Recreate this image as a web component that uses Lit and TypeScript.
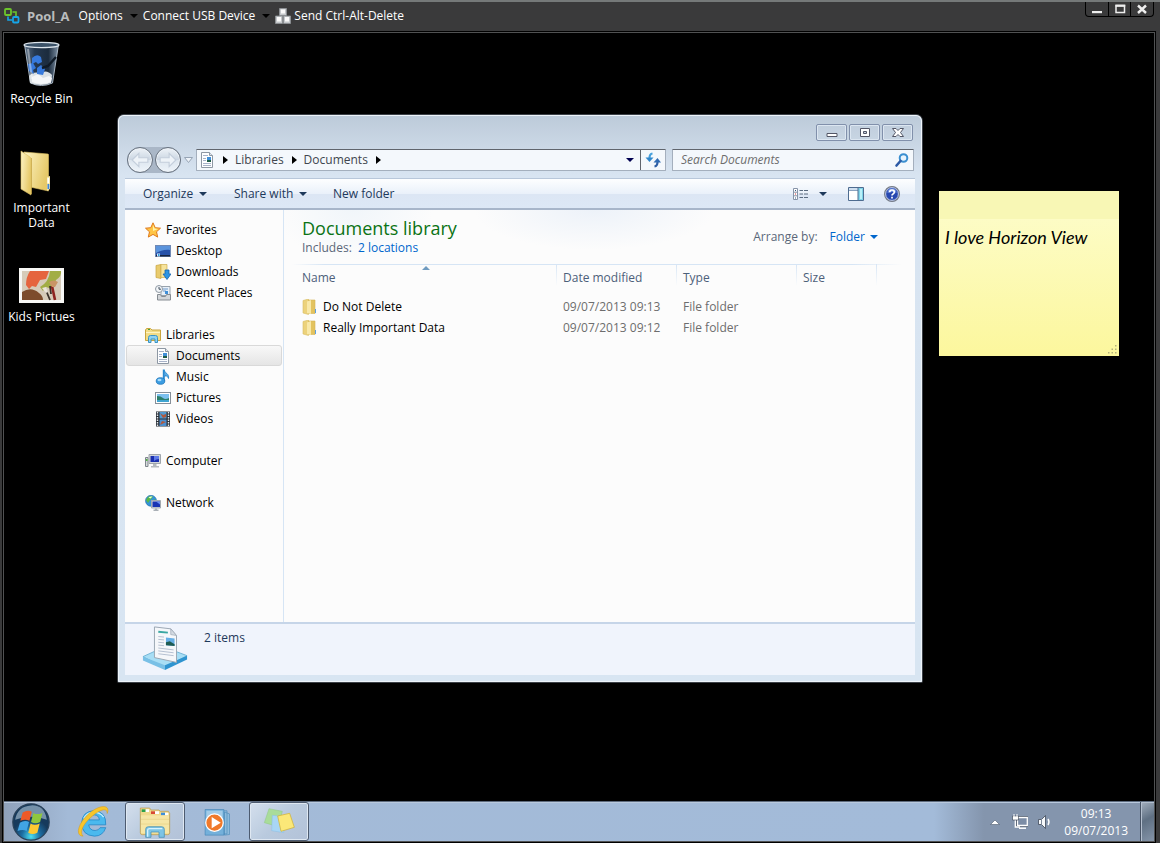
import { LitElement, html, svg, css, nothing } from "lit";
import { customElement, property } from "lit/decorators.js";
import { classMap } from "lit/directives/class-map.js";

const docShape = svg`
  <path d="M2.500 .5h8l3 3v12h-11z" fill="#fdfeff" stroke="#8d97a3"/>
  <path d="M10.500 .5v3h3" fill="#dfe6ee" stroke="#8d97a3"/>
  <path d="M4 3.500h5M4 6.500h3M4 8.500h3M4 11.500h8M4 13.500h8" stroke="#a7b2c8"/>
  <path d="M8 5h4v5H8z" fill="#3f8fd8"/><path d="M8 8h4v2H8z" fill="#1d5b46"/>`;

const icons: Record<string, unknown> = {
  doc: docShape,
  star: svg`
    <path d="M8 .8l2.200 4.900 5.300.5-4 3.600 1.200 5.300L8 12.400l-4.700 2.700 1.200-5.300-4-3.600 5.300-.5z" fill="#ffc545" stroke="#df7a1c" stroke-linejoin="round"/>
    <path d="M8 3l1.500 3.500 3.500.4L8 9z" fill="#fff3a8"/>`,
  desktop: svg`
    <rect x=".5" y="2.500" width="15" height="11" fill="#2550a8" stroke="#7089b4"/>
    <path d="M1 3h14v4C10 6 5 8 1 10z" fill="#5b94dc"/>
    <path d="M1 12h14v1.500H1z" fill="#16233f"/>
    <path d="M2 10.500h3v3H2z" fill="#d6e7fb"/><path d="M3 11h1.500v2H3z" fill="#2f9be0"/>`,
  downloads: svg`
    <path d="M1 1.500l5-1v14l-5-1z" fill="#e9cb6d" stroke="#c7a33f" stroke-width=".7"/>
    <path d="M6 .5h6v13H6z" fill="#f6e39b" stroke="#cfae4d" stroke-width=".7"/>
    <path d="M10 6h4v4h2l-4 5.500L8 10h2z" fill="#2d95e3" stroke="#1563ad" stroke-width=".8"/>`,
  recent: svg`
    <path d="M6 1.500h9v9H6z" fill="#e8f0f8" stroke="#98a2ac"/>
    <path d="M8 4h5M8 6h3" stroke="#6f99c8"/><path d="M10 6h3v3h-3z" fill="#3f8fd8"/>
    <path d="M2.500 9.500h3l1 2h4l1-2h4v5.500h-13z" fill="#d3d6d9" stroke="#868c92"/>
    <circle cx="4" cy="4" r="3.500" fill="#f3f6f9" stroke="#8f99a3"/><path d="M4 2v2.200h2" stroke="#42505e" fill="none"/>`,
  libraries: svg`
    <path d="M.5 3l1-1.500h4L7 3h8.500v10.500H.5z" fill="#f3dc86" stroke="#c9a53f"/>
    <path d="M1 5.500h14" stroke="#fff5c4"/><path d="M3 2.500h2" stroke="#4aa339"/>
    <path d="M3.500 15.500v-5q0-2 2-2h5q2 0 2 2v5h-2.500V12h-4v3.500z" fill="#8fd2f2" stroke="#3b94c5"/>`,
  music: svg`
    <path d="M9 1c.5 3 5.500 3.500 4.500 8.500-.8-2-2-3-3.500-3.200V8" fill="#57aee8" stroke="#1f7fc9" stroke-width=".8"/>
    <path d="M7.800 .5h2V12h-2z" fill="#2a8ad2"/>
    <ellipse cx="5.500" cy="12" rx="4.300" ry="3.300" fill="#3b9de2" stroke="#1c72b8" stroke-width=".8"/>
    <ellipse cx="4.500" cy="11" rx="2" ry="1.200" fill="#a8dcfa"/>`,
  pictures: svg`
    <rect x=".5" y="2.500" width="15" height="11" fill="#fff" stroke="#868f99"/>
    <path d="M2 4h12v8H2z" fill="#7cc0ee"/><path d="M2 6q4 0 6 2t6 0v4H2z" fill="#2c7f6b"/>
    <path d="M2 10h12v2H2z" fill="#3fa4d0"/>`,
  videos: svg`
    <path d="M1 .5h14v15H1z" fill="#2c3138"/>
    <path d="M2.500 1v14M13.500 1v14" stroke="#e6ebf0" stroke-width="1.400" stroke-dasharray="1.500 1"/>
    <path d="M4.500 1h7v6.500h-7z" fill="#4f9ad2"/><path d="M4.500 8.500h7V15h-7z" fill="#4b8fd0"/>
    <path d="M5 2l3 2 3-1v3l-3 1zM5 14l2-4 4 1z" fill="#b0583c"/>`,
  computer: svg`
    <path d="M.5 4.500h2.500v9H.5z" fill="#d6dadd" stroke="#7f868c"/><path d="M1 6h1.500v2H1z" fill="#52b543"/>
    <path d="M4 1.500h11.500v9H4z" fill="#d2d6da" stroke="#a0a6ac"/><path d="M5.500 3h8.500v6H5.500z" fill="#1b2fae"/>
    <path d="M9 3h5v3q-3 0-5 2z" fill="#5e7be8"/><path d="M8 11h3.500v2H14v1.500H6V13h2z" fill="#b5babe"/>`,
  network: svg`
    <circle cx="6" cy="5.800" r="5.500" fill="#3493d8" stroke="#1d6aa5" stroke-width=".6"/>
    <path d="M3 2q3-2 5 0L5 5 3 8 1 5zM7 6l3-2 1 3-3 2z" fill="#58b947"/><path d="M3.500 2.500q1.500-1.500 4-1l-2 2z" fill="#e7ffe5"/>
    <path d="M6.500 5.500h9v7.500h-9z" fill="#cfd4da" stroke="#a3aab2"/><path d="M7.500 6.500h7.500v5.500H7.500z" fill="#1a34b4"/>
    <path d="M11 6.500h4v3z" fill="#6a8cf0"/><path d="M10 13.500h2v1h1.500V16h-5v-1.500H10z" fill="#aab0b6"/>`,
  folder: svg`
    <path d="M1 1.500L6.500 0v15.500L1 14z" fill="#ecd27b" stroke="#d9bd63" stroke-width=".6"/>
    <path d="M6.500 1h6.500v13.500H6.500z" fill="#e3c35f" stroke="#d3b455" stroke-width=".6"/>
    <path d="M5 2.500L9 1v14l-4-1z" fill="#f8e8a8"/><path d="M13 10h1v4h-1z" fill="#5b9fe2"/>`,
  pool: svg`
    <rect x="1" y="1" width="6" height="6" rx="1" fill="none" stroke="#6cc52c" stroke-width="1.800"/>
    <rect x="9" y="9" width="5.500" height="5.500" rx="1" fill="none" stroke="#16a5e8" stroke-width="1.800"/>
    <path d="M8.500 4h3.500v4" fill="none" stroke="#6cc52c" stroke-width="1.600"/>
    <path d="M4 8.500V12h4" fill="none" stroke="#16a5e8" stroke-width="1.600"/>`,
  keys: svg`
    <path d="M4.500 .5h7v7h-7zM.5 8h7v7.500h-7zM8.500 8h7v7.500h-7z" fill="#c5c8cb" stroke="#8e9296" stroke-width=".8"/>
    <path d="M6 1.500h4v4H6zM2 9h4v4.500H2zM10 9h4v4.500h-4z" fill="#fafafa"/>`,
  refresh: svg`
    <path d="M7.500 1.500Q4.500 2 4.500 6" fill="none" stroke="#45a0dc" stroke-width="2.200"/><path d="M.5 5.500h8L4.500 10z" fill="#3187cc"/>
    <path d="M9.500 14.500q3-.5 3-4.500" fill="none" stroke="#2f5fa5" stroke-width="2.200"/><path d="M8.500 10.500h7.500L12.500 6z" fill="#2f6bb3"/>`,
  search: svg`
    <circle cx="9.500" cy="6" r="3.800" fill="#e9f4fd" stroke="#3b8fd0" stroke-width="2"/>
    <path d="M6.500 9L2.500 13.500" stroke="#2c5aa5" stroke-width="2.600" stroke-linecap="round"/>`,
  details: svg`
    <path d="M.5 2.500h4v11h-4zM.5 6.200h4M.5 9.800h4" fill="#fff" stroke="#8794a8"/>
    <path d="M2 4h1v1H2zM2 11.500h1v1H2z" fill="#35597e"/><path d="M2 7.500h1v1H2z" fill="#d33"/>
    <path d="M6.500 4.500h3.500m1 0h4M6.500 8h3.500m1 0h4M6.500 11.500h3.500m1 0h4" stroke="#5a6b80"/>`,
  pane: svg`
    <path d="M.5 1.500h15v13H.5z" fill="#fff" stroke="#4e6c90"/><path d="M1 2h9v2H1z" fill="#cfdff0"/>
    <path d="M1 4.500h9" stroke="#8ba3bf"/><path d="M10 2h5v12h-5z" fill="#7fd3e8"/><path d="M12 3h2v10h-2z" fill="#b9f0f8"/><path d="M10 2v12" stroke="#4e6c90"/>`,
  help: svg`
    <circle cx="8" cy="8" r="7.400" fill="#2748b0" stroke="#7a7f88" stroke-width="1.200"/>
    <circle cx="8" cy="8" r="6.400" fill="none" stroke="#d5dcea" stroke-width=".9"/>
    <path d="M3.500 7q0-4.500 4.500-4.500T12.500 7q-4-2-9 0z" fill="#6f8fe0"/>
    <path d="M5.700 6.200q0-2.200 2.300-2.200t2.300 2q0 1.200-1.300 1.900-1 .5-1 1.700M8 10.800v1.600" fill="none" stroke="#fff" stroke-width="1.700"/>`,
  min: svg`<path d="M3 8.500h10v3H3z" fill="#fff" stroke="#535666"/>`,
  max: svg`<path d="M3.500 3.500h9v8h-9zM6.500 6.500h3v2h-3z" fill="#fff" fill-rule="evenodd" stroke="#535666"/>`,
  close: svg`<path d="M2.500 3.500h3.500l2 2 2-2h3.500L10.500 7.500l3 4H10l-2-2-2 2H2.500l3-4z" fill="#fff" stroke="#535666"/>`,
  cmin: svg`<path d="M3 10h10v2.200H3z" fill="#eee"/>`,
  cmax: svg`<path d="M4 5h8.500v6.500H4z" fill="none" stroke="#eee" stroke-width="1.500"/><path d="M3.300 4.500h10" stroke="#eee" stroke-width="2"/>`,
  cclose: svg`<path d="M4 4.500l8 7.500M12 4.500L4 12" stroke="#eee" stroke-width="2.400"/>`,
  up: svg`<path d="M3.500 10.500L8 6l4.500 4.500z" fill="#fff" stroke="#4f5d70" stroke-width=".6"/>`,
  lan: svg`
    <path d="M5.500 3.500h10v8h-10z" fill="#72839b" stroke="#2f3a49" stroke-width="2.400"/>
    <path d="M5.500 3.500h9.800v8H5.500z" fill="#7c8da6" stroke="#fff" stroke-width="1.300"/>
    <path d="M7 14.200h7" stroke="#fff" stroke-width="1.500"/>
    <path d="M3.300 5v8H8" fill="none" stroke="#fff" stroke-width="1.300"/><path d="M.5 2h6v4h-6z" fill="#fff" stroke="#2f3a49" stroke-width=".6"/><path d="M2 0v3M5 0v3" stroke="#fff"/>`,
  sound: svg`
    <path d="M1.500 5.500h3l4-4v13l-4-4h-3z" fill="#f7f9fb" stroke="#3d4858" stroke-width=".8"/><path d="M4.500 5.500v5" stroke="#7b8798"/>
    <path d="M11 5q2 3 0 6" fill="none" stroke="#fff" stroke-width="1.400"/>`,
};

const bigIcons: Record<string, unknown> = {
  bin: svg`
    <defs><linearGradient id="g" x2="1"><stop stop-color="#5d7187"/><stop offset=".3" stop-color="#25384f"/><stop offset=".7" stop-color="#1b2b3d"/><stop offset="1" stop-color="#7f92a6"/></linearGradient></defs>
    <path d="M6.500 4.500h34l-6 38.500q-11 5-22 0z" fill="url(#g)" stroke="#a9b6c3"/>
    <ellipse cx="23.500" cy="5" rx="17.500" ry="2.600" fill="#3b5268" stroke="#dde5ec" stroke-width="1.200"/>
    <path d="M11 36q4-5 11-3 7-4 12 2l-1 8q-10 4-21 0z" fill="#d9dfe4"/>
    <path d="M14 37l6-3 5 4 6-2 3 2-1 4q-10 4-19 0z" fill="#f4f6f8"/>
    <path d="M14 18q5-5 9-1l1 5-4 2-2-2-4 2zM10 24l5-1 3 5-3 2 1 4-5-3zM19 28l4-3 4 4-2 6-6-1z" fill="#3679dc"/>
    <path d="M24 28l6-2 8-9" stroke="#0f1a26" stroke-width="2.500" fill="none"/>
    <path d="M10 9l4 30" stroke="#fff" stroke-opacity=".4" stroke-width="2"/>`,
  folder: svg`
    <defs><linearGradient id="g" x2="1" y2=".4"><stop stop-color="#fdf4c6"/><stop offset="1" stop-color="#e6c968"/></linearGradient></defs>
    <path d="M6 3l24 2q.5 0 .5 1v36L12 38z" fill="url(#g)" stroke="#dcbf62" stroke-width=".6"/>
    <path d="M29 28l3-1v13l-3 2z" fill="#f4e6a8"/><path d="M29.500 35h1.800v5h-1.800z" fill="#3c86dd"/><path d="M29.500 29h1.500v5h-1.500z" fill="#fff"/>
    <path d="M3 2l9 6q1 .5 1 2v36L3 40z" fill="url(#g)" stroke="#dcbf62" stroke-width=".6"/>
    <path d="M13.500 9v36" stroke="#c9a848" stroke-width=".8"/>`,
  picture: svg`
    <path d="M1 10h45v35H1z" fill="#f7f7f5"/><path d="M4 13h39v29H4z" fill="#d6cbb9"/>
    <path d="M12 13h19l-3 8-6 1-4 7-4-1-3 3-3-4q0-8 4-14z" fill="#e5643e"/>
    <path d="M34 13h9q1 5-5 9l-4 9-6-2-3 4-3-4q9-5 10-16z" fill="#a2ad45"/>
    <path d="M4 34q9-6 17 1 4 3 4 7H4z" fill="#7d4c2c"/>
    <path d="M27 30l5 12M32 28l1 8" stroke="#3b322b" stroke-width="1.800"/><path d="M34 28l3 14" stroke="#8d2420" stroke-width="2.600"/>
    <path d="M31 24q5-3 9 0l-3 5h-3z" fill="#c99566"/><path d="M24 30l4-1 2 5-2 1z" fill="#ebe5da"/>`,
  orb: svg`
    <defs><radialGradient id="g" cy=".9"><stop stop-color="#4de0f0"/><stop offset=".5" stop-color="#1d6fa4"/><stop offset="1" stop-color="#163a5c"/></radialGradient></defs>
    <circle cx="24" cy="24" r="23" fill="url(#g)" stroke="#2b4259" stroke-width="1.500"/>
    <path d="M4 21Q7 4 24 3t20 18q-20-7-40 0z" fill="#c5d9ea" opacity=".55"/>
    <path d="M13.500 12q6-4 11.500-1l-3 11.500q-5-3-11.500 0z" fill="#ef5a28"/><path d="M27 12.500q5 3 11.500 0l-3 11.500q-6 3-11.500 0z" fill="#8fc73e"/>
    <path d="M10 25q6-4 11.500-1l-3 11.500q-5-3-11.500 0z" fill="#41a4e4"/><path d="M23.500 26q5 3 11.500 0l-3 11.500q-6 3-11.500 0z" fill="#fdc832"/>`,
  ie: svg`
    <path d="M42 28H18q1 8 9 8 5 0 7-4h8q-4 12-16 12Q8 43 8 25 9 9 25 8q18 1 17 20zM18 21h15q-1-7-7-7t-8 7z" fill="#4ab9ee" stroke="#1b7fc2" fill-rule="evenodd"/>
    <path d="M11 19q4-8 13-9 10 0 15 7" stroke="#c6effd" stroke-width="2" fill="none"/>
    <path d="M10 44C-3 44 4 22 22 9 36-1 49 0 44 12 44 3 34 7 25 14 11 25 4 38 10 44z" fill="#f7c52b" stroke="#d69a17" stroke-width=".7"/>`,
  explorer: svg`
    <path d="M2 11V3h14l2 3h12l2 2h12l2 3v29q0 3-3 3H5q-3 0-3-3z" fill="#f0d98c" stroke="#b5954a"/>
    <path d="M4 5h6v4H4z" fill="#2ca14b"/><path d="M18 8h6v4h-6z" fill="#d84a34"/><path d="M33 10h6v4h-6z" fill="#3c8edb"/>
    <path d="M10 5h5v4h-5zM24 8h6v4h-6zM39 10h5v4h-5z" fill="#fff"/>
    <path d="M3 14h42v27H3z" fill="#f6e6a6"/><path d="M3 20h42M3 27h42" stroke="#e6d083"/>
    <path d="M10 47V35q0-4 4-4h20q4 0 4 4v12h-8v-8H18v8z" fill="#7dc4e4" stroke="#3987b0"/>
    <path d="M13 46V36q0-2 3-2h19" stroke="#d6f3ff" stroke-width="2" fill="none"/>`,
  player: svg`
    <path d="M36 8l8 3v33l-8 1zM12 6h28v37H12z" fill="#8dbbdd" stroke="#4b8ab9"/>
    <path d="M5 4h30v41H5z" fill="#74b0da" stroke="#4184b7"/><path d="M7 6h26v16H7z" fill="#a3cce8"/>
    <circle cx="20" cy="25" r="14" fill="#f0792a" stroke="#fff" stroke-width="2"/><path d="M15.500 16L30 25l-14.500 9z" fill="#fff"/>`,
  notes: svg`
    <path d="M9 4l20 4-6 23-21-6z" fill="#a9dc9a" stroke="#8cc680" stroke-width=".7"/><path d="M14 14l19 2-2 24-18-3z" fill="#a9d6f5" stroke="#88bce2" stroke-width=".7"/>
    <path d="M22 15l18-4 7 21-20 6z" fill="#fbe878" stroke="#cfae2e"/>`,
  library: svg`
    <path d="M1 33l22-10 24 9-23 13z" fill="#a8def5" stroke="#6fb4d6"/><path d="M1 33l23 9v5L1 37z" fill="#79c0e6"/><path d="M24 42l23-10v4L24 47z" fill="#2f94d0"/>
    <path d="M13 2l17 2 6 7v28l-23-5z" fill="#f5f7fa" stroke="#9aa5b2"/><path d="M30 4v6l6 1z" fill="#d3dae2" stroke="#9aa5b2" stroke-width=".7"/>
    <path d="M17 7l10 1" stroke="#3aa7a2" stroke-width="2"/>
    <path d="M17 12l6 .6M17 15l6 .6M17 18l6 .6M17 21l6 .6M17 24l16 2M17 27l16 2M17 30l16 2" stroke="#b3bed0"/>
    <path d="M25 13l9 1v8l-9-1z" fill="#65aee6"/><path d="M25 18l4-1 5 3v2l-9-1z" fill="#1e5b52"/>`,
};

const icon = (name: string, size = 16) =>
  html`<svg width=${size} height=${size} viewBox="0 0 16 16" aria-hidden="true">${icons[name]}</svg>`;

const base = css`
  * { box-sizing: border-box; }
  button, input, textarea {
    font: inherit; color: inherit; background: none; border: 0; padding: 0; margin: 0; outline: 0;
  }
  button { display: inline-flex; align-items: center; white-space: nowrap; }
  svg { display: block; flex: none; }
`;

@customElement("large-icon")
class LargeIcon extends LitElement {
  @property() name = "";
  @property({ type: Number }) size = 48;
  static styles = css`:host { display: block; flex: none; } svg { display: block; }`;
  render() {
    return html`<svg width=${this.size} height=${this.size} viewBox="0 0 48 48" aria-hidden="true">${bigIcons[this.name]}</svg>`;
  }
}

@customElement("client-bar")
class ClientBar extends LitElement {
  static styles = [base, css`
    :host { display: flex; align-items: center; height: 31px; padding: 0 6px 2px 4px; color: #fff; background: #3a3a3b; border-top: 2px solid #757979; flex: none; }
    .pool { font-size: 13px; font-weight: 700; color: #b9bcbe; margin: 0 9px 0 7px; }
    .menu { margin-right: 5px; }
    .menu::after { content: ""; border: 4px solid transparent; border-top-color: #000; border-bottom: 0; margin-left: 7px; }
    .send { gap: 3px; }
    .controls { display: flex; margin-left: auto; align-self: flex-start; border: 1px solid #000; border-top: 0; border-radius: 0 0 4px 4px; }
    .controls button { width: 22px; height: 14px; justify-content: center; }
    .controls button + button { border-left: 1px solid #000; }
    .controls button:last-child { width: 23px; }
  `];
  render() {
    return html`
      ${icon("pool")}
      <span class="pool">Pool_A</span>
      <button class="menu">Options</button>
      <button class="menu">Connect USB Device</button>
      <button class="send">${icon("keys")}Send Ctrl-Alt-Delete</button>
      <div class="controls">
        <button aria-label="Minimize">${icon("cmin")}</button>
        <button aria-label="Maximize">${icon("cmax")}</button>
        <button aria-label="Close">${icon("cclose")}</button>
      </div>`;
  }
}

interface NavItem { label: string; icon: string; child?: boolean; selected?: boolean }

const navGroups: NavItem[][] = [
  [
    { label: "Favorites", icon: "star" },
    { label: "Desktop", icon: "desktop", child: true },
    { label: "Downloads", icon: "downloads", child: true },
    { label: "Recent Places", icon: "recent", child: true },
  ],
  [
    { label: "Libraries", icon: "libraries" },
    { label: "Documents", icon: "doc", child: true, selected: true },
    { label: "Music", icon: "music", child: true },
    { label: "Pictures", icon: "pictures", child: true },
    { label: "Videos", icon: "videos", child: true },
  ],
  [{ label: "Computer", icon: "computer" }],
  [{ label: "Network", icon: "network" }],
];

const files = [
  { name: "Do Not Delete", modified: "09/07/2013 09:13", type: "File folder" },
  { name: "Really Important Data", modified: "09/07/2013 09:12", type: "File folder" },
];

@customElement("explorer-window")
class ExplorerWindow extends LitElement {
  static styles = [base, css`
    :host { display: flex; flex-direction: column; padding: 0 7px 7px; border-radius: 6px 6px 1px 1px; color: #1e395b;
      background: linear-gradient(#bccad9, #d8e4f1 60px, #d8e5f2);
      box-shadow: inset 0 0 0 1px #eef4fa, 0 0 0 1px #3c4148; }
    .caption { display: flex; justify-content: flex-end; gap: 2px; padding: 9px 2px 8px; }
    .caption button { width: 31px; height: 17px; justify-content: center; border: 1px solid #8190ab; border-radius: 2px; box-shadow: inset 0 0 0 1px #dce6f1; }
    .address { display: flex; align-items: center; height: 22px; padding: 0 1px 0 2px; color: #40464e; }
    .back-forward { display: flex; align-items: center; gap: 2px; border-radius: 14px; background: #aab7c7; }
    .round { width: 26px; height: 26px; justify-content: center; border: 1px solid #68727f; border-radius: 50%; background: linear-gradient(#eef3f8, #cbd6e2 50%, #dde6ef 52%, #eef4fa); box-shadow: inset 0 0 0 1px #eef3f8; }
    .history { margin: 0 3px; }
    .crumbs, .search { display: flex; align-items: center; height: 22px; background: #f4f8fc; border: 1px solid #a4afbd; border-top-color: #60656d; border-radius: 1px; }
    .crumbs { flex: 1; padding-left: 2px; }
    .crumb { height: 20px; }
    .step::before { content: ""; border: 4px solid transparent; border-left: 5px solid #000; border-right: 0; margin: 0 7px 0 8px; }
    .end { margin-left: auto; width: 21px; height: 20px; justify-content: center; }
    .refresh { width: 25px; height: 20px; justify-content: center; border-left: 1px solid #60656d; }
    .search { width: 242px; margin-left: 6px; padding: 0 3px 0 8px; }
    .search input { flex: 1; min-width: 0; font-style: italic; color: #6d6d6d; }
    .search input::placeholder { color: #6d6d6d; opacity: 1; }
    .arrow::after, .solo { content: ""; border: 4px solid transparent; border-top: 4px solid #1e395b; border-bottom: 0; }
    .end .solo { border-top-color: #000050; }
    .arrow::after { margin-left: 6px; }
    .toolbar { display: flex; align-items: center; height: 32px; margin-top: 7px; padding: 0 15px 0 18px; border-top: 1px solid #b8c7da; border-bottom: 2px solid #a8b6ca;
      background: linear-gradient(#fdfeff, #eaf1fa 50%, #dce6f4 52%, #dde8f6); }
    .organize { width: 91px; }
    .share { width: 99px; }
    .views { margin-left: auto; gap: 10px; }
    .pane { margin: 0 20px 0 21px; }
    .body { display: flex; flex: 1; background: #fcfcfc; min-height: 0; }
    nav { width: 159px; border-right: 1px solid #d6e5f5; padding: 9px 1px; flex: none; }
    .group { list-style: none; margin: 0 0 21px; padding: 0; }
    .item { display: flex; align-items: center; gap: 5px; height: 21px; padding-left: 18px; color: #000; text-decoration: none; border: 1px solid transparent; border-radius: 3px; }
    .child { padding-left: 28px; }
    .selected { background: linear-gradient(#f8f8f8, #e5e5e5); border-color: #d9d9d9; }
    main { flex: 1; min-width: 0; }
    .heading { display: flex; align-items: center; justify-content: space-between; height: 54px; padding: 0 37px 0 18px;
      background: radial-gradient(ellipse 80px 50px at 70px 0, #f1f6fa, transparent), radial-gradient(ellipse 120px 40px at 310px 0, #edf2f9, transparent); }
    h1 { margin: 0; font-size: 18px; line-height: 24px; font-weight: 400; color: #0b7315; }
    .headline { padding-bottom: 2px; }
    .includes { line-height: 16px; color: #5a6779; }
    a.link { color: #0066cc; text-decoration: none; margin-left: 3px; }
    .arrange { display: flex; align-items: center; color: #5a6779; }
    .arrange button { color: #0066cc; margin-left: 12px; }
    .arrange button::after { border-top-color: #0066cc; margin-left: 5px; }
    table { width: 100%; border-collapse: collapse; table-layout: fixed; color: #6d6d6d; }
    col.name { width: 273px; } col.date, col.type { width: 120px; } col.size { width: 80px; }
    thead tr { background: linear-gradient(90deg, transparent 8px, #d6e5f5 40px, #d6e5f5 90%, transparent 98%) top / 100% 1px no-repeat; }
    th { height: 32px; padding: 0 0 5px 6px; text-align: left; font-weight: 400; color: #4c607a;
      background: linear-gradient(#d6e5f5, transparent) right top / 1px 22px no-repeat; }
    th:first-child, td:first-child { padding-left: 18px; }
    th:last-child { background: none; }
    .sorted { position: relative; }
    .sorted::after { content: ""; position: absolute; top: 2px; left: 138px; border: 4px solid transparent; border-top: 0; border-bottom-color: #6f9bc0; }
    td { height: 21px; padding: 0 0 0 6px; }
    .file { display: flex; align-items: center; gap: 5px; color: #000; }
    footer { display: flex; gap: 16px; height: 53px; padding: 1px 17px; background: #f0f4fc; border-top: 2px solid #c6d5e8; }
    footer p { margin: 0; line-height: 25px; }
  `];
  render() {
    return html`
      <div class="caption">
        <button aria-label="Minimize">${icon("min")}</button>
        <button aria-label="Restore">${icon("max")}</button>
        <button aria-label="Close">${icon("close")}</button>
      </div>
      <div class="address">
        <div class="back-forward">
          <button class="round" aria-label="Back"><svg width="18" height="18" viewBox="0 0 16 16"><path d="M1 8l6-6v4h8v4H7v4z" fill="#eef3f8" stroke="#c3cedb"/></svg></button>
          <button class="round" aria-label="Forward"><svg width="18" height="18" viewBox="0 0 16 16"><path d="M15 8L9 2v4H1v4h8v4z" fill="#eef3f8" stroke="#c3cedb"/></svg></button>
        </div>
        <button class="history" aria-label="Recent pages"><svg width="9" height="6" viewBox="0 0 9 6"><path d="M.5 .5h8l-4 5z" fill="#edf2f8" stroke="#96a4b5"/></svg></button>
        <div class="crumbs">
          ${icon("doc")}
          <button class="crumb step">Libraries</button>
          <button class="crumb step">Documents</button>
          <button class="crumb step" aria-label="More"></button>
          <button class="end" aria-label="Previous locations"><span class="solo"></span></button>
          <button class="refresh" aria-label="Refresh">${icon("refresh")}</button>
        </div>
        <label class="search">
          <input type="search" aria-label="Search Documents" placeholder="Search Documents">
          ${icon("search")}
        </label>
      </div>
      <div class="toolbar">
        <button class="organize arrow">Organize</button>
        <button class="share arrow">Share with</button>
        <button>New folder</button>
        <button class="views" aria-label="Change view">${icon("details")}<span class="solo"></span></button>
        <button class="pane" aria-label="Preview pane">${icon("pane")}</button>
        <button aria-label="Help">${icon("help")}</button>
      </div>
      <div class="body">
        <nav>
          ${navGroups.map((group) => html`<ul class="group">${group.map((n) => html`
            <li><a href="#" class=${classMap({ item: true, child: !!n.child, selected: !!n.selected })}
              aria-current=${n.selected ? "page" : nothing}>${icon(n.icon)}${n.label}</a></li>`)}</ul>`)}
        </nav>
        <main>
          <div class="heading">
            <div class="headline">
              <h1>Documents library</h1>
              <div class="includes">Includes: <a class="link" href="#">2 locations</a></div>
            </div>
            <div class="arrange">Arrange by:<button class="arrow">Folder</button></div>
          </div>
          <table>
            <colgroup><col class="name"><col class="date"><col class="type"><col class="size"><col></colgroup>
            <thead><tr><th class="sorted">Name</th><th>Date modified</th><th>Type</th><th>Size</th><th></th></tr></thead>
            <tbody>${files.map((f) => html`
              <tr><td><span class="file">${icon("folder")}${f.name}</span></td><td>${f.modified}</td><td>${f.type}</td><td></td><td></td></tr>`)}
            </tbody>
          </table>
        </main>
      </div>
      <footer><large-icon name="library" size="46"></large-icon><p>2 items</p></footer>`;
  }
}

@customElement("sticky-note")
class StickyNote extends LitElement {
  static styles = [base, css`
    :host { display: flex; flex-direction: column; background: linear-gradient(#fdfdcd, #fcf79d); }
    .strip { height: 28px; background: #f8f7b5; }
    textarea { flex: 1; resize: none; padding: 7px 6px; color: #000; font: italic 18px/22px "Segoe Print", Lato, sans-serif; overflow: hidden; }
    .grip { position: absolute; right: 2px; bottom: 2px; }
  `];
  render() {
    return html`
      <div class="strip"></div>
      <textarea aria-label="Note" .value=${"I love Horizon View"}></textarea>
      <svg class="grip" width="9" height="9" viewBox="0 0 9 9" fill="#b5b27c"><path d="M7 0h1.500v1.500H7zM7 3.500h1.500V5H7zM7 7h1.500v1.500H7zM3.500 3.500H5V5H3.500zM3.500 7H5v1.500H3.500zM0 7h1.500v1.500H0z"/></svg>`;
  }
}

@customElement("task-bar")
class TaskBar extends LitElement {
  static styles = [base, css`
    :host { display: flex; align-items: stretch; gap: 2px; height: 40px; flex: none; color: #fff; border-top: 1px solid #5d6b7e;
      background: linear-gradient(90deg, #8fa1ba, #a3bad7 64px, #a3bbd9 calc(100% - 220px), #8495ad calc(100% - 170px)); box-shadow: inset 0 1px #b9c9dd; }
    button { justify-content: center; }
    .start { width: 57px; padding-right: 3px; }
    .task { width: 60px; }
    .open { border: 1px solid #4d5b70; border-radius: 3px; background: linear-gradient(135deg, #d4dfed, #b9cade 50%, #b3c2d8); box-shadow: inset 0 0 0 1px #dfe8f2; }
    .tray { display: flex; align-items: center; gap: 9px; margin-left: auto; }
    .clock { text-align: center; line-height: 17px; margin: 0 10px 0 2px; padding-top: 1px; }
    .show { width: 14px; border-left: 1px solid #465264; background: linear-gradient(150deg, #a3afbe, #5f7083 45%, #8494a8); box-shadow: inset 1px 1px #b4c0cf; }
  `];
  render() {
    return html`
      <button class="start" aria-label="Start"><large-icon name="orb" size="38"></large-icon></button>
      <button class="task" aria-label="Internet Explorer"><large-icon name="ie" size="34"></large-icon></button>
      <button class="task open" aria-label="Windows Explorer"><large-icon name="explorer" size="32"></large-icon></button>
      <button class="task" aria-label="Media Player"><large-icon name="player" size="30"></large-icon></button>
      <button class="task open" aria-label="Sticky Notes"><large-icon name="notes" size="32"></large-icon></button>
      <div class="tray">
        <button aria-label="Show hidden icons">${icon("up")}</button>
        <button aria-label="Network">${icon("lan")}</button>
        <button aria-label="Volume">${icon("sound")}</button>
        <div class="clock"><div>09:13</div><div>09/07/2013</div></div>
      </div>
      <button class="show" aria-label="Show desktop"></button>`;
  }
}

@customElement("app-root")
class AppRoot extends LitElement {
  static styles = [base, css`
    :host { display: flex; flex-direction: column; height: 100vh; background: #3a3a3b; font: 12px/16px "Segoe UI", "Open Sans", "Noto Sans", sans-serif; overflow: hidden; }
    .frame { flex: 1; display: flex; margin: 0 4px 0 2px; border: 1px solid #000; min-height: 0; }
    .screen { flex: 1; display: flex; flex-direction: column; border: 1px solid #505152; background: #000; min-width: 0; }
    .desktop { position: relative; flex: 1; padding: 7px 0; min-height: 0; }
    .shortcuts { display: flex; flex-direction: column; gap: 28px; width: 75px; }
    .shortcut { display: flex; flex-direction: column; align-items: center; gap: 3px; min-height: 81px; color: #fff; line-height: 15px; white-space: normal; text-align: center; }
    .caption { max-width: 68px; }
    explorer-window { position: absolute; left: 114px; top: 82px; width: 804px; height: 567px; }
    sticky-note { position: absolute; left: 935px; top: 158px; width: 180px; height: 165px; }
  `];
  render() {
    const shortcuts = [
      { label: "Recycle Bin", icon: "bin" },
      { label: "Important Data", icon: "folder" },
      { label: "Kids Pictues", icon: "picture" },
    ];
    return html`
      <client-bar></client-bar>
      <div class="frame"><div class="screen">
        <div class="desktop">
          <div class="shortcuts">${shortcuts.map((s) => html`
            <button class="shortcut"><large-icon name=${s.icon}></large-icon><span class="caption">${s.label}</span></button>`)}
          </div>
          <explorer-window></explorer-window>
          <sticky-note></sticky-note>
        </div>
        <task-bar></task-bar>
      </div></div>`;
  }
}
